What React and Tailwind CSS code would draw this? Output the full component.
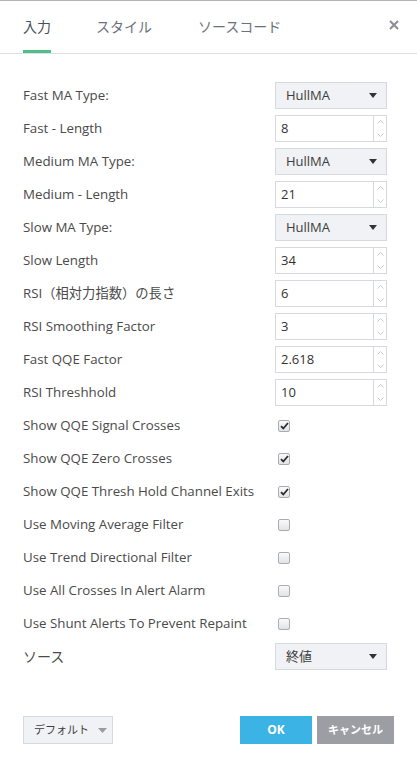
import React from "react";

const font = { fontFamily: '"Open Sans", "Noto Sans CJK JP", sans-serif' };

function Select({ value }) {
  return (
    <div className="flex h-[27px] w-[112px] items-center justify-between border border-[#d6d9de] bg-[#f1f2f5] pl-[10px] pr-[9px] text-[13px] text-[#3c3c3c]">
      <span>{value}</span>
      <svg width="8" height="5" viewBox="0 0 8 5"><path d="M0 0h8L4 5z" fill="#333" /></svg>
    </div>
  );
}

function NumInput({ value }) {
  return (
    <div className="flex h-[27px] w-[112px] border border-[#d6d9de] bg-white">
      <div className="flex flex-1 items-center pl-[5px] text-[13px] text-[#333]">{value}</div>
      <div className="flex w-[13px] flex-col border-l border-[#d6d9de]">
        <div className="flex flex-1 items-center justify-center">
          <svg width="7" height="4" viewBox="0 0 7 4"><path d="M0.5 3.5L3.5 0.5L6.5 3.5" stroke="#b8bcc4" fill="none" strokeWidth="0.8" /></svg>
        </div>
        <div className="flex flex-1 items-center justify-center">
          <svg width="7" height="4" viewBox="0 0 7 4"><path d="M0.5 0.5L3.5 3.5L6.5 0.5" stroke="#b8bcc4" fill="none" strokeWidth="0.8" /></svg>
        </div>
      </div>
    </div>
  );
}

function Check({ checked }) {
  return (
    <div className="ml-[3px] flex h-[12px] w-[12px] items-center justify-center rounded-[2px] border border-[#a9acb1] bg-gradient-to-b from-[#fafafa] to-[#e2e3e6]">
      {checked && (
        <svg width="9" height="8" viewBox="0 0 9 8"><path d="M1 4.2L3.3 6.5L8 1" stroke="#2b2b2b" strokeWidth="1.8" fill="none" /></svg>
      )}
    </div>
  );
}

const rows = [
  ["Fast MA Type:", "select", "HullMA"],
  ["Fast - Length", "num", "8"],
  ["Medium MA Type:", "select", "HullMA"],
  ["Medium - Length", "num", "21"],
  ["Slow MA Type:", "select", "HullMA"],
  ["Slow Length", "num", "34"],
  ["RSI（相対力指数）の長さ", "num", "6"],
  ["RSI Smoothing Factor", "num", "3"],
  ["Fast QQE Factor", "num", "2.618"],
  ["RSI Threshhold", "num", "10"],
  ["Show QQE Signal Crosses", "check", true],
  ["Show QQE Zero Crosses", "check", true],
  ["Show QQE Thresh Hold Channel Exits", "check", true],
  ["Use Moving Average Filter", "check", false],
  ["Use Trend Directional Filter", "check", false],
  ["Use All Crosses In Alert Alarm", "check", false],
  ["Use Shunt Alerts To Prevent Repaint", "check", false],
  ["ソース", "select", "終値"],
];

export default function App() {
  return (
    <div className="h-[769px] w-[417px] border-t border-[#b4b4b4] bg-white" style={font}>
      <div className="relative flex h-[53px] items-end border-b border-[#e0e0e0] pl-[23px]">
        <div className="flex h-full flex-col justify-between">
          <div className="pt-[15px] text-[14px] text-[#4a4f57]">入力</div>
          <div className="h-[3px] w-[28px] bg-[#4fbf89]" />
        </div>
        <div className="ml-[45px] flex h-full flex-col">
          <div className="pt-[15px] text-[14px] text-[#6b717a]">スタイル</div>
        </div>
        <div className="ml-[46px] flex h-full flex-col">
          <div className="pt-[15px] text-[14px] text-[#6b717a]">ソースコード</div>
        </div>
        <div className="absolute right-[18px] top-[19px]">
          <svg width="10" height="10" viewBox="0 0 10 10"><path d="M1 1L9 9M9 1L1 9" stroke="#8a8d93" strokeWidth="2" /></svg>
        </div>
      </div>
      <div className="flex flex-col pt-[25px]">
        {rows.map(([label, type, val], i) => (
          <div key={i} className="flex h-[33px] items-center pl-[23px]">
            <div className={"w-[252px] whitespace-nowrap text-[#4a4a4a] " + (label === "ソース" ? "text-[14px]" : "text-[13.3px]")}>{label}</div>
            {type === "select" && <Select value={val} />}
            {type === "num" && <NumInput value={val} />}
            {type === "check" && <Check checked={val} />}
          </div>
        ))}
      </div>
      <div className="mt-[43px] flex items-center pl-[23px]">
        <div className="flex h-[28px] w-[90px] items-center whitespace-nowrap border border-[#d6d9de] bg-[#f1f2f5] pl-[10px] text-[11px] text-[#3c3c3c]">
          <span>デフォルト</span>
          <svg className="ml-[9px]" width="9" height="5" viewBox="0 0 9 5"><path d="M0 0h9L4.5 5z" fill="#9a9ca1" /></svg>
        </div>
        <div className="ml-[127px] flex h-[28px] w-[72px] items-center justify-center bg-[#3bb3e4] text-[12px] font-bold text-white">OK</div>
        <div className="ml-[5px] flex h-[28px] w-[77px] items-center justify-center whitespace-nowrap bg-[#9c9ea4] text-[11px] font-bold text-white">キャンセル</div>
      </div>
    </div>
  );
}
